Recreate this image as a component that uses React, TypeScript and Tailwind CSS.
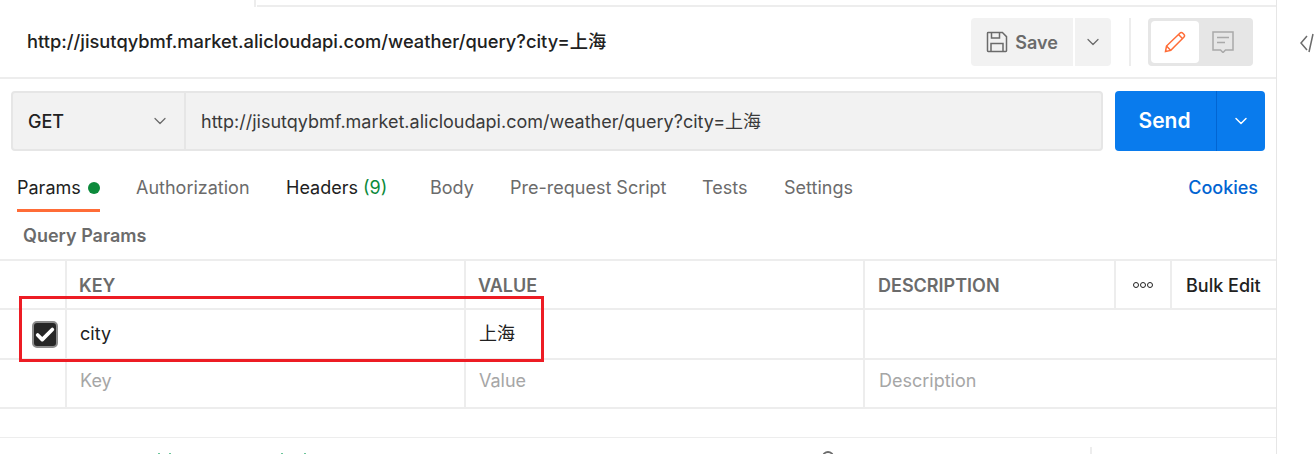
import { ChevronDown, Check } from 'lucide-react';

const font = { fontFamily: 'Inter, "Noto Sans CJK SC", sans-serif' };

function SaveIcon() {
  return (
    <svg width="22" height="22" viewBox="0 0 22 22" fill="none" stroke="#6b6b6b" strokeWidth="1.5">
      <path d="M1.5 2.2c0-.4.3-.7.7-.7h14.2l4.1 4.1v14.2c0 .4-.3.7-.7.7H2.2a.7.7 0 0 1-.7-.7z" />
      <path d="M5.5 1.5v5.5h8V1.5M5 20.5v-8h12v8" />
    </svg>
  );
}

function PencilIcon() {
  return (
    <svg width="22" height="22" viewBox="0 0 22 22" fill="none" stroke="#ff6c37" strokeWidth="1.5">
      <path d="M1.5 20.5l1-5.5L15.8 2.2c.8-.8 2.2-.8 3 0l1 1c.8.8.8 2.2 0 3L6.8 19.4z" />
      <path d="M14.5 3.5l4.2 4.2M2.5 15l4.3 4.4" />
    </svg>
  );
}

function CommentIcon() {
  return (
    <svg width="22" height="22" viewBox="0 0 22 22" fill="none" stroke="#a9a9a9" strokeWidth="1.5">
      <path d="M1 1h20v18h-7.5L11 21.5 8.5 19H1z" />
      <path d="M5 6.5h12M5 11.5h8" />
    </svg>
  );
}

export default function App() {
  return (
    <div style={font} className="flex w-[1314px] h-[454px] overflow-hidden bg-white text-[#212121]">
      <div className="relative w-[1277px] h-full border-r border-[#e6e6e6] shrink-0">
        {/* top strip of the tab bar */}
        <div className="flex h-[7px]">
          <div className="w-[254px] h-full" />
          <div className="w-[2px] h-full bg-[#ededed]" />
          <div className="flex-1 ml-px h-[2px] mt-[5px] bg-[#ededed]" />
        </div>

        {/* title row */}
        <div className="flex items-center h-[72px] pl-[27px] pr-[23px] border-b-2 border-[#ededed]">
          <div className="flex-1 text-[18.3px] font-medium">http://jisutqybmf.market.alicloudapi.com/weather/query?city=上海</div>
          <div className="flex items-center">
            <div className="flex items-center justify-center gap-[7px] w-[102px] h-12 rounded-l bg-[#f2f2f2] text-[#6b6b6b] font-semibold text-[18px]">
              <SaveIcon />
              <span>Save</span>
            </div>
            <div className="flex items-center justify-center w-9 h-12 ml-[2px] rounded-r bg-[#f2f2f2]">
              <ChevronDown size={20} color="#6b6b6b" strokeWidth={1.5} />
            </div>
            <div className="w-[2px] h-12 ml-[18px] mr-[17px] bg-[#ededed]" />
            <div className="flex p-[3px] w-[105px] h-12 rounded bg-[#e6e6e6]">
              <div className="flex items-center justify-center w-12 rounded bg-white">
                <PencilIcon />
              </div>
              <div className="flex items-center justify-center flex-1 pr-1">
                <CommentIcon />
              </div>
            </div>
          </div>
        </div>

        {/* url row */}
        <div className="flex h-[60px] mt-[12px] ml-[11px] mr-[11px]">
          <div className="flex flex-1 mr-3 rounded border-2 border-[#e6e6e6] bg-[#f2f2f2]">
            <div className="flex items-center justify-between w-[173px] pl-[15px] pr-[14px] border-r-2 border-[#e6e6e6] text-[18px] font-medium">
              <span>GET</span>
              <ChevronDown size={20} color="#6b6b6b" strokeWidth={1.5} />
            </div>
            <div className="flex items-center pl-[15px] text-[18px] text-[#3a3a3a]">http://jisutqybmf.market.alicloudapi.com/weather/query?city=上海</div>
          </div>
          <div className="flex w-[150px] rounded bg-[#097bed] text-white">
            <div className="flex items-center justify-center w-[101px] pr-[2px] font-semibold text-[21px]">Send</div>
            <div className="flex items-center justify-center flex-1 border-l border-[#0265d2]">
              <ChevronDown size={20} strokeWidth={1.75} />
            </div>
          </div>
        </div>

        {/* tabs */}
        <div className="flex items-start h-[58px] pt-[25px] pl-[17px] pr-[18px] text-[18px] text-[#6b6b6b]">
          <div className="w-[119px]">
            <div className="flex w-fit items-center gap-[7px] pb-[9px] border-b-[3px] border-[#ff6c37] text-[#212121]">
              <span className="leading-[24px]">Params</span>
              <span className="w-3 h-3 rounded-full bg-[#0c8a3b]" />
            </div>
          </div>
          <div className="w-[150px] leading-[24px]">Authorization</div>
          <div className="w-[144px] leading-[24px] text-[#212121]">
            Headers <span className="text-[#0c8a3b]">(9)</span>
          </div>
          <div className="w-[80px] leading-[24px]">Body</div>
          <div className="w-[192px] leading-[24px]">Pre-request Script</div>
          <div className="w-[82px] leading-[24px]">Tests</div>
          <div className="w-[100px] leading-[24px]">Settings</div>
          <div className="ml-auto leading-[24px] font-medium text-[#0265d2]">Cookies</div>
        </div>

        <div className="h-[50px] pl-[23px] pt-[13px] text-[18px] font-semibold text-[#6b6b6b]">Query Params</div>

        {/* params table */}
        <div className="border-t-2 border-[#ededed]">
          <div className="flex h-[49px] border-b-2 border-[#ededed] text-[18px] font-semibold text-[#6b6b6b]">
            <div className="w-[67px] border-r-2 border-[#ededed]" />
            <div className="flex items-center w-[399px] pl-3 pt-px border-r-2 border-[#ededed]">KEY</div>
            <div className="flex items-center w-[399px] pl-3 pt-px border-r-2 border-[#ededed]">VALUE</div>
            <div className="flex items-center w-[251px] pl-[13px] pt-px border-r-2 border-[#ededed]">DESCRIPTION</div>
            <div className="flex items-center justify-center w-[56px] gap-px border-r-2 border-[#ededed]">
              <span className="w-[6px] h-[6px] rounded-full border border-[#212121]" />
              <span className="w-[6px] h-[6px] rounded-full border border-[#212121]" />
              <span className="w-[6px] h-[6px] rounded-full border border-[#212121]" />
            </div>
            <div className="flex items-center flex-1 pl-[14px] pt-px font-medium text-[#212121]">Bulk Edit</div>
          </div>
          <div className="flex h-[50px] border-b-2 border-[#ededed] text-[18px]">
            <div className="flex items-center w-[67px] border-r-2 border-[#ededed] pl-[32px] pt-px">
              <div className="flex items-center justify-center w-[26px] h-[27px] rounded-[5px] border-2 border-[#8c8c8c] bg-[#262626]">
                <Check size={22} color="#fff" strokeWidth={4} />
              </div>
            </div>
            <div className="flex items-center w-[399px] pl-[13px] pb-[2px] border-r-2 border-[#ededed]">city</div>
            <div className="flex items-center w-[399px] pl-[13px] pb-[2px] border-r-2 border-[#ededed]">上海</div>
            <div className="flex-1" />
          </div>
          <div className="flex h-[49px] border-b-2 border-[#ededed] text-[18px] text-[#a6a6a6]">
            <div className="w-[67px] border-r-2 border-[#ededed]" />
            <div className="flex items-center w-[399px] pl-[13px] pb-[6px] border-r-2 border-[#ededed]">Key</div>
            <div className="flex items-center w-[399px] pl-[13px] pb-[6px] border-r-2 border-[#ededed]">Value</div>
            <div className="flex items-center pl-[14px] pb-[6px]">Description</div>
          </div>
        </div>

        <div className="mt-[28px] border-t border-[#ededed]" />

        {/* top of the response row, cut off by the window */}
        <div className="flex h-4">
          <span className="ml-[158px] mt-[15px] w-[2px] h-px bg-[#6cc69a]" />
          <span className="ml-[9px] mt-[15px] w-[2px] h-px bg-[#6cc69a]" />
          <span className="ml-[110px] mt-[15px] w-[2px] h-px bg-[#6cc69a]" />
          <span className="ml-[21px] mt-[15px] w-[2px] h-px bg-[#6cc69a]" />
          <span className="ml-[516px] mt-[13px] w-3 h-3 rounded-full border-2 border-[#6b6b6b]" />
          <span className="ml-[256px] mt-[9px] w-[2px] h-[7px] bg-[#ededed]" />
        </div>

        {/* red annotation drawn on the screenshot */}
        <div className="absolute left-[19px] top-[296px] w-[525px] h-[66px] border-[3px] border-[#ed1c24]" />
      </div>
      <div className="pl-[23px] pt-[33px]">
        <svg width="14" height="20" viewBox="0 0 14 20" fill="none" stroke="#6b6b6b" strokeWidth="1.5">
          <path d="M7 3L1 10l6 7M13 1L9 19" />
        </svg>
      </div>
    </div>
  );
}
